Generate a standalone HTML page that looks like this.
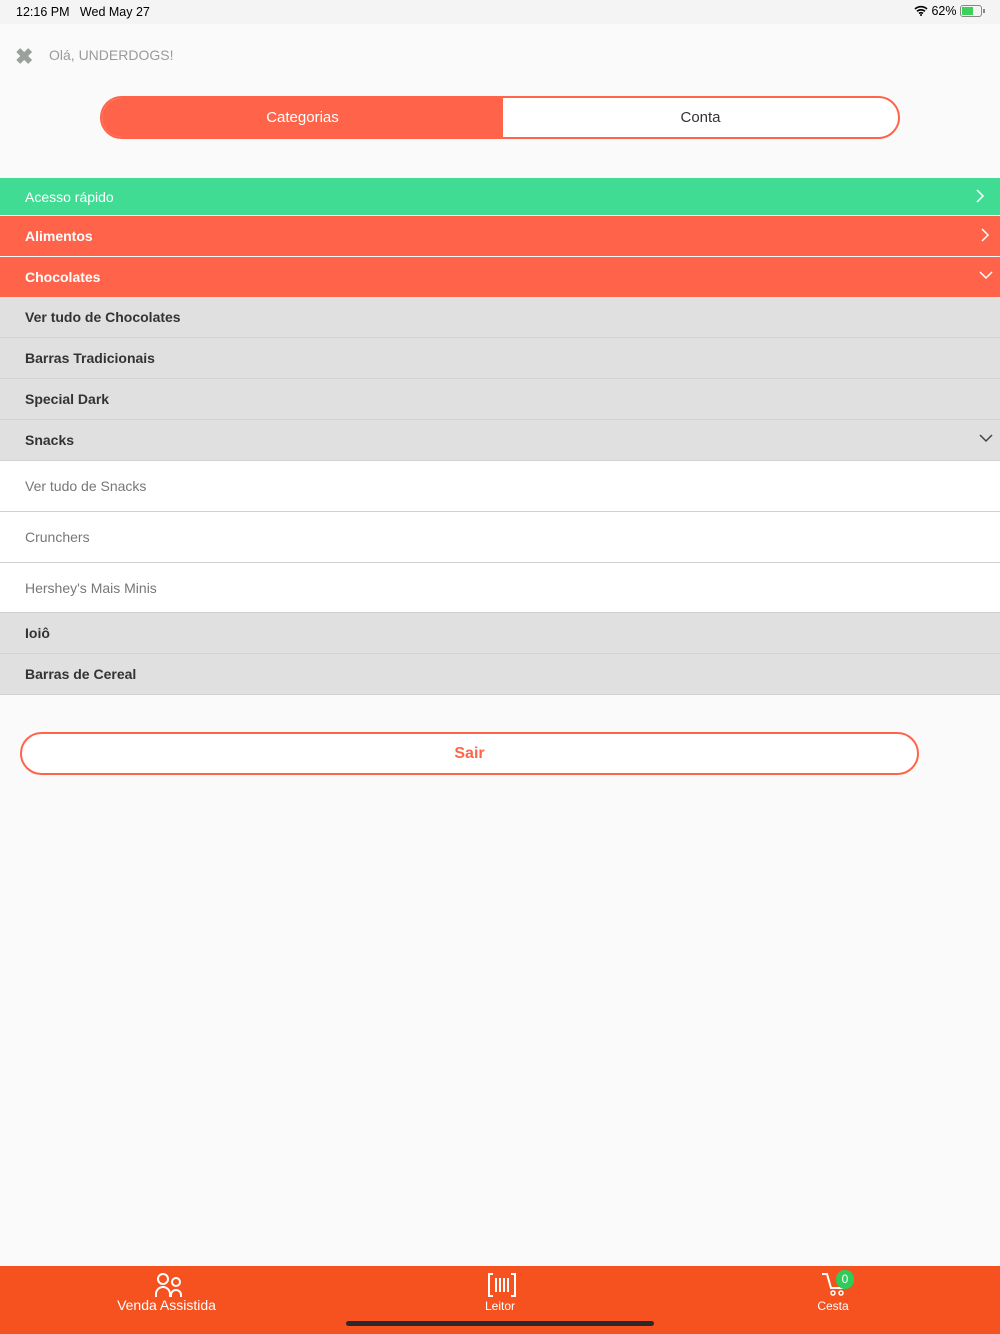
<!DOCTYPE html>
<html><head><meta charset="utf-8"><style>
*{margin:0;padding:0;box-sizing:border-box}
body{width:1000px;height:1334px;background:#fafafa;font-family:"Liberation Sans",sans-serif;position:relative;overflow:hidden}
.a{position:absolute}
.row{position:absolute;left:0;width:1000px;font-size:14px;padding-left:25px;display:flex;align-items:center}
.g{background:#e0e0e0;color:#333;font-weight:bold;border-bottom:1px solid #d2d2d2}
.w{background:#fff;color:#777;border-bottom:1px solid #d0d0d0}
.c{color:#fff;font-size:14px}
</style></head><body>
<div class="a" style="left:0;top:0;width:1000px;height:24px;background:#f4f4f4"></div>
<div class="a" style="left:16px;top:5px;font-size:12.5px;color:#000">12:16 PM&nbsp;&nbsp; Wed May 27</div>
<div class="a" style="left:914px;top:4px;font-size:12.5px;color:#000">
<svg width="14" height="11" viewBox="0 0 14 11" style="vertical-align:-1px"><path d="M1 4a9 9 0 0 1 12 0M3 6.3a6 6 0 0 1 8 0M5 8.5a3 3 0 0 1 4 0" stroke="#000" stroke-width="1.6" fill="none"/><circle cx="7" cy="10" r="1" fill="#000"/></svg> 62%</div>
<div class="a" style="left:960px;top:5px;width:22px;height:12px;border:1px solid #888;border-radius:3px"><div style="margin:1px;width:11px;height:8px;background:#3bd15a"></div></div>
<div class="a" style="left:983px;top:9px;width:2px;height:4px;background:#888"></div>
<div class="a" style="left:15px;top:44px;font-size:22px;font-weight:bold;color:#9aa09c">✖</div>
<div class="a" style="left:49px;top:47px;font-size:14px;color:#9a9a9a">Olá, UNDERDOGS!</div>
<div class="a" style="left:100px;top:96px;width:800px;height:43px;border:2px solid #ff644a;border-radius:22px;overflow:hidden;background:#fff">
<div style="position:absolute;left:0;top:0;width:401px;height:100%;background:#ff644a;color:#fff;font-size:15px;display:flex;align-items:center;justify-content:center">Categorias</div>
<div style="position:absolute;left:401px;top:0;right:0;height:100%;color:#333;font-size:15px;display:flex;align-items:center;justify-content:center">Conta</div></div>
<div class="row c" style="top:178px;height:37px;background:#40dc94">Acesso rápido</div>
<div class="row c" style="top:216px;height:40px;background:#ff644a;font-weight:bold">Alimentos</div>
<div class="row c" style="top:257px;height:40px;background:#ff644a;font-weight:bold">Chocolates</div>
<svg class="a" style="left:975px;top:188px" width="10" height="16"><path d="M2 2l6 6-6 6" stroke="#fff" stroke-width="1.5" fill="none"/></svg>
<svg class="a" style="left:980px;top:227px" width="10" height="16"><path d="M2 2l6 6-6 6" stroke="#fff" stroke-width="1.5" fill="none"/></svg>
<svg class="a" style="left:978px;top:270px" width="16" height="10"><path d="M2 2l6 6 6-6" stroke="#fff" stroke-width="1.5" fill="none"/></svg>
<div class="row g" style="top:297px;height:41px">Ver tudo de Chocolates</div>
<div class="row g" style="top:338px;height:41px">Barras Tradicionais</div>
<div class="row g" style="top:379px;height:41px">Special Dark</div>
<div class="row g" style="top:420px;height:41px">Snacks</div>
<svg class="a" style="left:978px;top:433px" width="16" height="10"><path d="M2 2l6 6 6-6" stroke="#444" stroke-width="1.5" fill="none"/></svg>
<div class="row w" style="top:461px;height:51px">Ver tudo de Snacks</div>
<div class="row w" style="top:512px;height:51px">Crunchers</div>
<div class="row w" style="top:563px;height:50px">Hershey's Mais Minis</div>
<div class="row g" style="top:613px;height:41px">Ioiô</div>
<div class="row g" style="top:654px;height:41px">Barras de Cereal</div>
<div class="a" style="left:20px;top:732px;width:899px;height:43px;border:2px solid #ff644a;border-radius:22px;background:#fff;color:#ff644a;font-weight:bold;font-size:16px;display:flex;align-items:center;justify-content:center">Sair</div>
<div class="a" style="left:0;top:1266px;width:1000px;height:68px;background:#f55220"></div>
<svg class="a" style="left:154px;top:1272px" width="32" height="26" viewBox="0 0 32 26"><circle cx="9" cy="7" r="5" stroke="#fff" stroke-width="2" fill="none"/><circle cx="22" cy="10" r="4" stroke="#fff" stroke-width="2" fill="none"/><path d="M2 25v-3a7 7 0 0 1 14 0v3M17 25v-2a5 5 0 0 1 10 0v2" stroke="#fff" stroke-width="2" fill="none"/></svg>
<div class="a" style="left:100px;top:1297px;width:133px;text-align:center;color:#fff;font-size:14px">Venda Assistida</div>
<svg class="a" style="left:487px;top:1272px" width="30" height="26" viewBox="0 0 30 26"><path d="M6 2H2v22h4M24 2h4v22h-4" stroke="#fff" stroke-width="2" fill="none"/><path d="M9 6v14M13 6v14M17 6v14M21 6v14" stroke="#fff" stroke-width="2"/></svg>
<div class="a" style="left:460px;top:1299px;width:80px;text-align:center;color:#fff;font-size:12px">Leitor</div>
<svg class="a" style="left:820px;top:1272px" width="30" height="26" viewBox="0 0 30 26"><path d="M2 2h5l4 14h12l2-8" stroke="#fff" stroke-width="2" fill="none"/><circle cx="13" cy="21" r="2" stroke="#fff" stroke-width="1.5" fill="none"/><circle cx="21" cy="21" r="2" stroke="#fff" stroke-width="1.5" fill="none"/></svg>
<div class="a" style="left:836px;top:1270px;width:18px;height:19px;border-radius:9px;background:#2ecc5a;color:#fff;font-size:12px;text-align:center;line-height:19px">0</div>
<div class="a" style="left:793px;top:1299px;width:80px;text-align:center;color:#fff;font-size:12px">Cesta</div>
<div class="a" style="left:346px;top:1321px;width:308px;height:5px;border-radius:3px;background:#2a2a2a"></div>
</body></html>
